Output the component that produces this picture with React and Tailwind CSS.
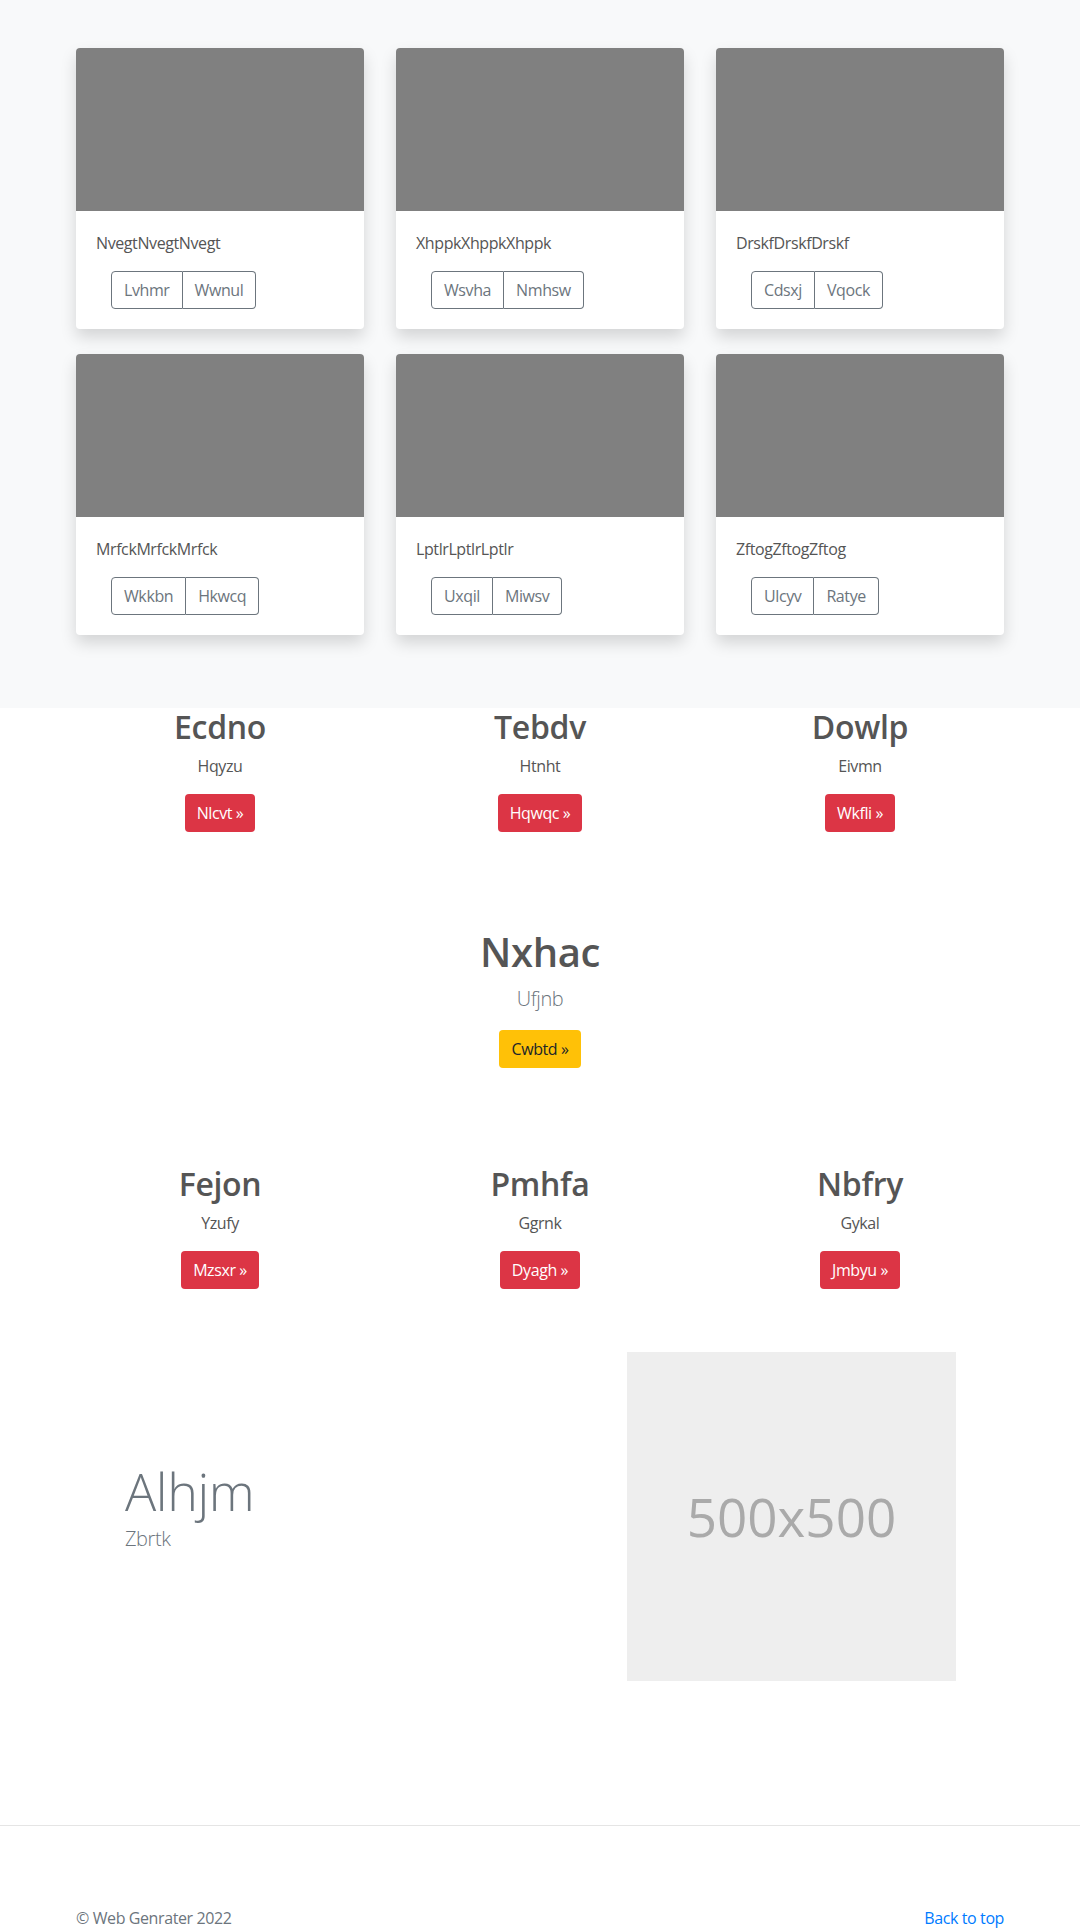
import React from "react";

const cards = [
  ["NvegtNvegtNvegt", "Lvhmr", "Wwnul"],
  ["XhppkXhppkXhppk", "Wsvha", "Nmhsw"],
  ["DrskfDrskfDrskf", "Cdsxj", "Vqock"],
  ["MrfckMrfckMrfck", "Wkkbn", "Hkwcq"],
  ["LptlrLptlrLptlr", "Uxqil", "Miwsv"],
  ["ZftogZftogZftog", "Ulcyv", "Ratye"],
];

const feat1 = [
  ["Ecdno", "Hqyzu", "Nlcvt"],
  ["Tebdv", "Htnht", "Hqwqc"],
  ["Dowlp", "Eivmn", "Wkfli"],
];
const feat2 = [
  ["Fejon", "Yzufy", "Mzsxr"],
  ["Pmhfa", "Ggrnk", "Dyagh"],
  ["Nbfry", "Gykal", "Jmbyu"],
];

function Card({ t, a, b }) {
  return (
    <div className="bg-white rounded-[4px] overflow-hidden shadow-[0_8px_16px_rgba(0,0,0,0.15)]">
      <div className="h-[163px] bg-[#808080]" />
      <div className="p-5">
        <p className="text-[16px] leading-6 text-[#555] mb-4">{t}</p>
        <div className="ml-[15px] flex">
          <button className="h-[38px] px-3 text-[16px] leading-6 text-[#6c757d] border border-[#6c757d] rounded-l-[4px]">
            {a}
          </button>
          <button className="h-[38px] px-3 text-[16px] leading-6 text-[#6c757d] border border-l-0 border-[#6c757d] rounded-r-[4px]">
            {b}
          </button>
        </div>
      </div>
    </div>
  );
}

function Feature({ h, p, btn }) {
  return (
    <div className="flex flex-col items-center">
      <h2 className="text-[32px] leading-[38px] font-semibold tracking-[-0.01em] text-[#555] mb-2">{h}</h2>
      <p className="text-[16px] leading-6 text-[#555] mb-4">{p}</p>
      <button className="h-[38px] px-3 text-[16px] leading-6 text-white bg-[#dc3545] rounded-[4px]">
        {btn} »
      </button>
    </div>
  );
}

export default function App() {
  return (
    <div
      className="w-[1080px] bg-white tracking-[-0.025em]"
      style={{ fontFamily: '"Open Sans", "Noto Sans", sans-serif' }}
    >
      <section className="bg-[#f8f9fa] pt-12 pb-[73px]">
        <div className="w-[928px] mx-auto grid grid-cols-3 gap-x-8 gap-y-[25px]">
          {cards.map((c, i) => (
            <Card key={i} t={c[0]} a={c[1]} b={c[2]} />
          ))}
        </div>
      </section>

      <section className="w-[928px] mx-auto grid grid-cols-3 gap-x-8">
        {feat1.map((f, i) => (
          <Feature key={i} h={f[0]} p={f[1]} btn={f[2]} />
        ))}
      </section>

      <section className="mt-[96px] flex flex-col items-center">
        <h1 className="text-[40px] leading-[48px] font-semibold tracking-[-0.01em] text-[#555] mb-2">Nxhac</h1>
        <p className="text-[20px] leading-[30px] font-light text-[#6c757d] mb-4">Ufjnb</p>
        <button className="h-[38px] px-3 text-[16px] leading-6 text-[#212529] bg-[#ffc107] rounded-[4px]">
          Cwbtd »
        </button>
      </section>

      <section className="mt-[97px] w-[928px] mx-auto grid grid-cols-3 gap-x-8">
        {feat2.map((f, i) => (
          <Feature key={i} h={f[0]} p={f[1]} btn={f[2]} />
        ))}
      </section>

      <section className="mt-[63px] w-[928px] mx-auto grid grid-cols-2 items-center">
        <div className="pl-[49px] pb-[22px]">
          <h2 className="text-[52px] leading-[67px] font-light text-[#6c757d]">Alhjm</h2>
          <p className="text-[20px] leading-[30px] font-light text-[#6c757d]">Zbrtk</p>
        </div>
        <div className="flex justify-end pr-[48px]">
          <div className="w-[329px] h-[329px] bg-[#eeeeee] flex items-center justify-center">
            <span className="text-[53px] tracking-normal text-[#aaaaaa]">500x500</span>
          </div>
        </div>
      </section>

      <footer className="mt-[144px] border-t border-[#e5e5e5] pt-[80px]">
        <div className="w-[928px] mx-auto flex justify-between text-[16px] leading-6">
          <p className="text-[#6c757d]">© Web Genrater 2022</p>
          <a href="#" className="text-[#007bff]">Back to top</a>
        </div>
      </footer>
    </div>
  );
}
